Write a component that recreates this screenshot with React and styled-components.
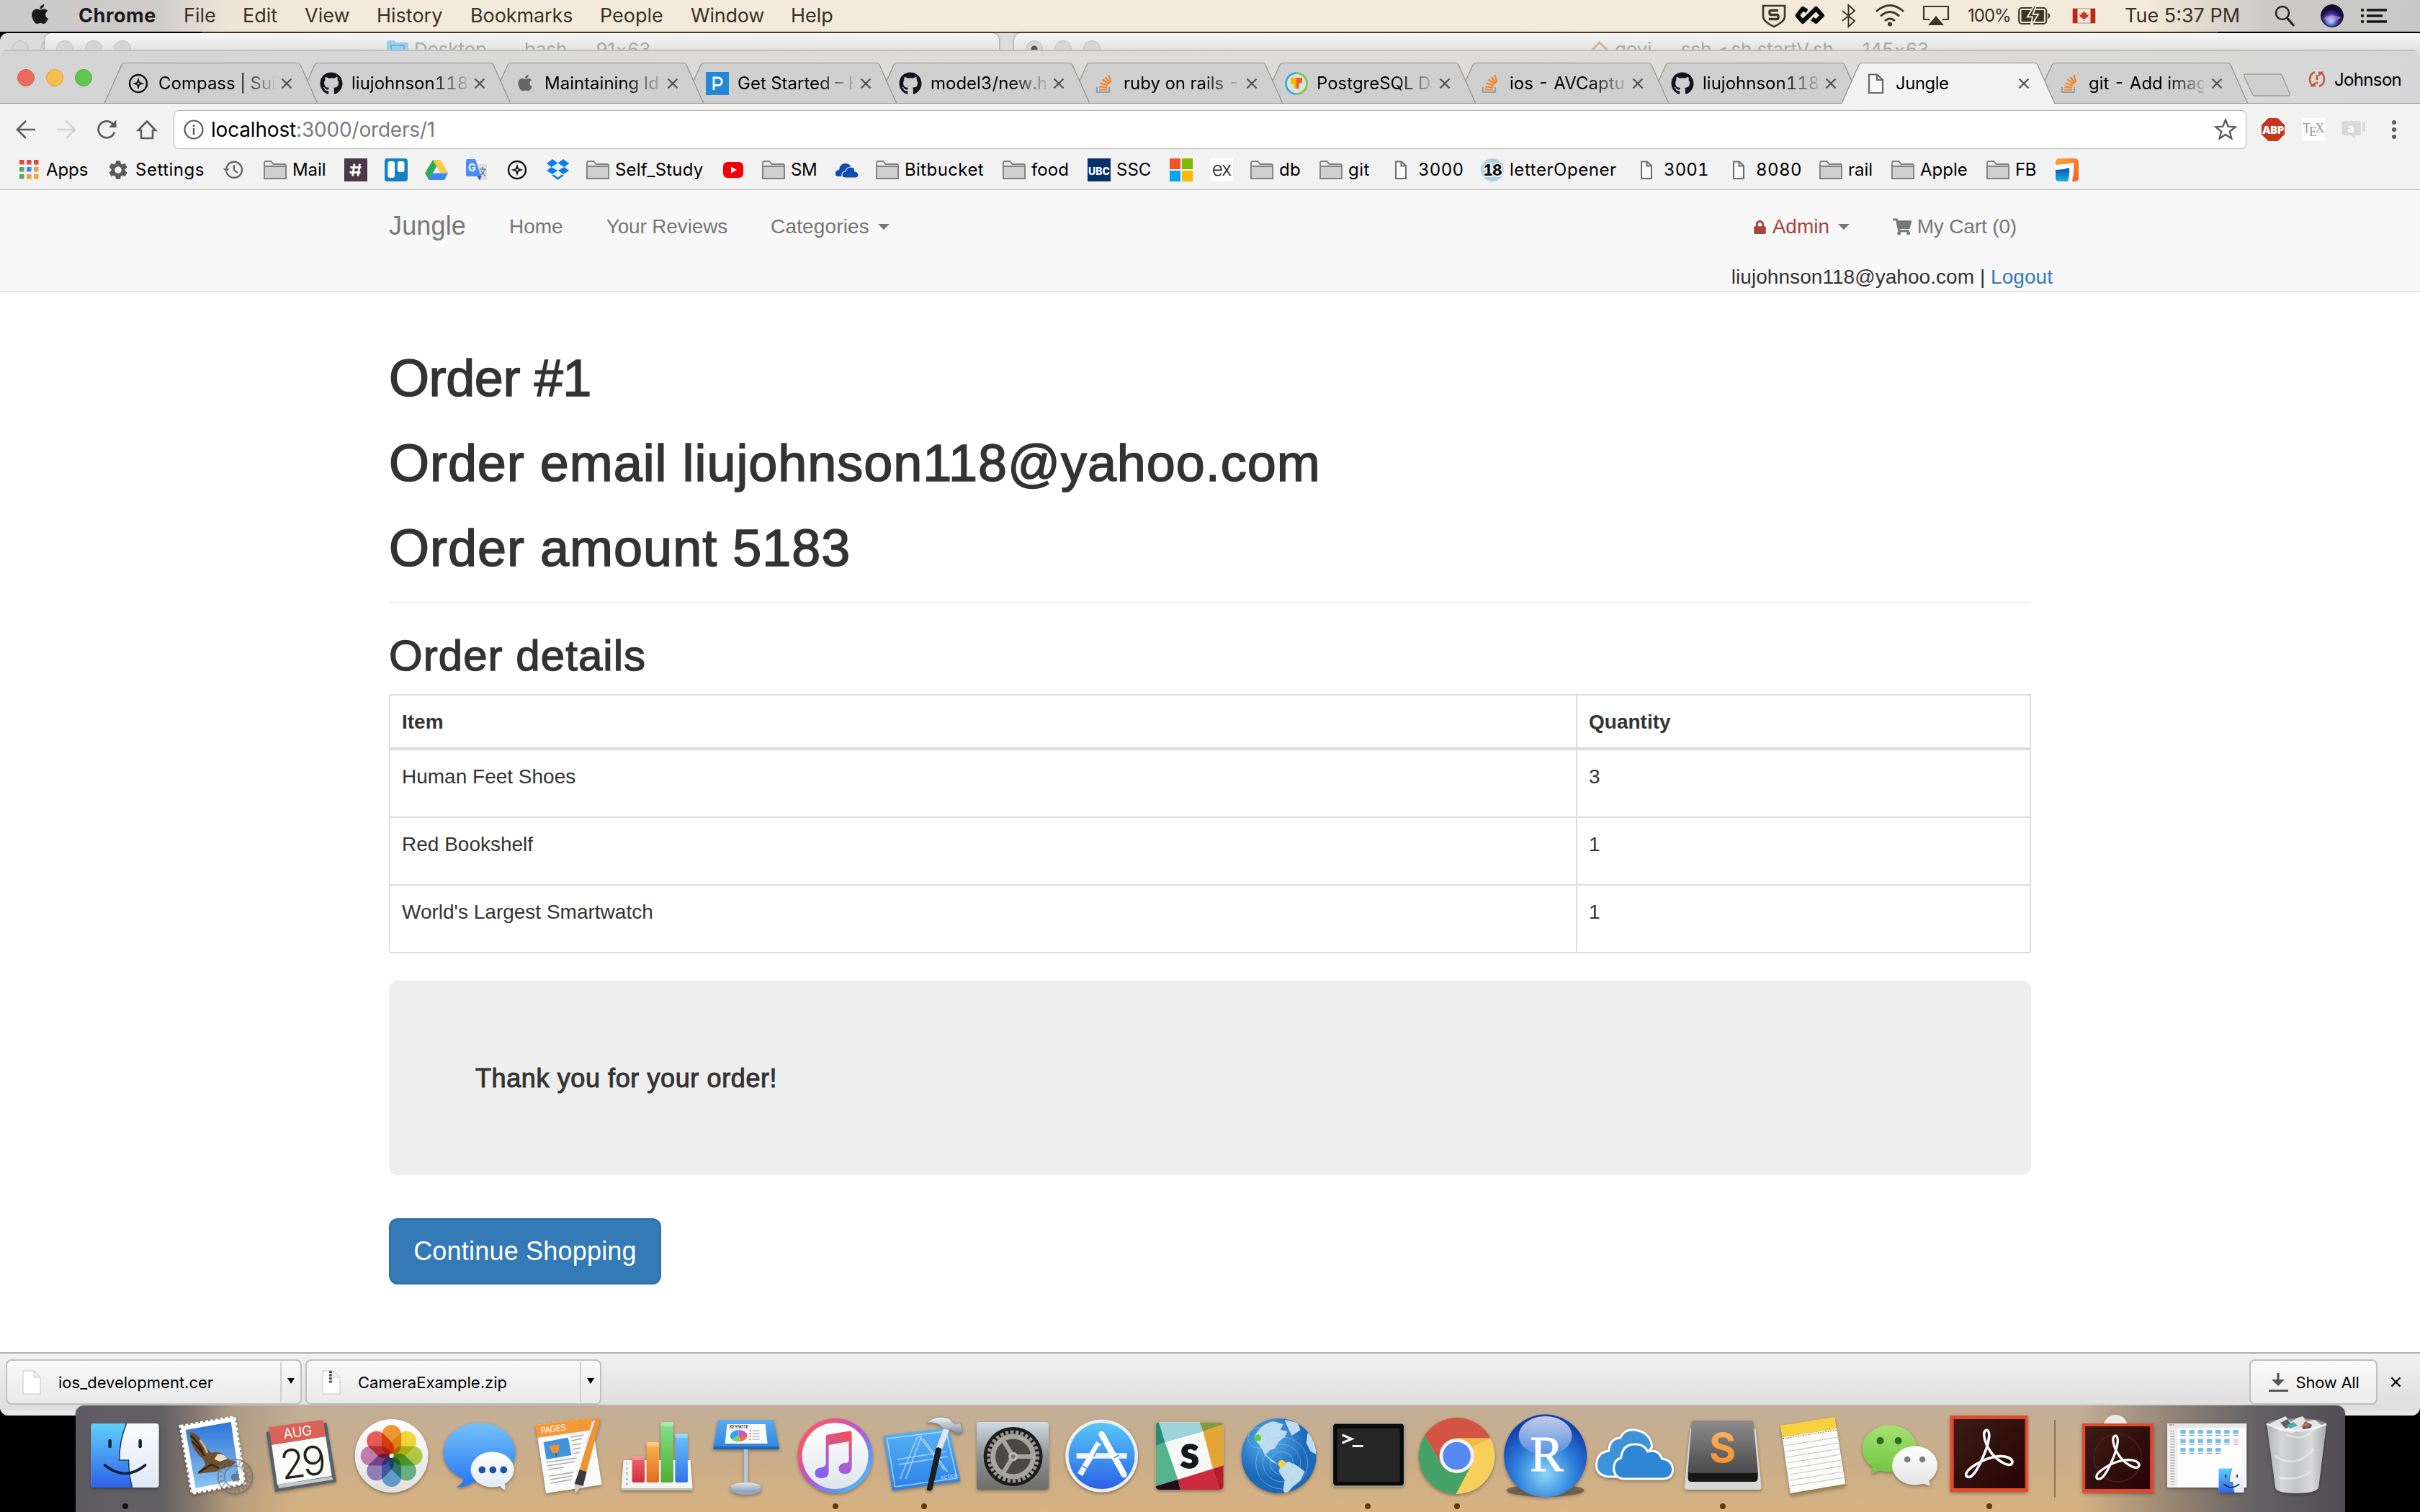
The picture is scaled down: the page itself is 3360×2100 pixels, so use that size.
import React from "react";
import styled, { createGlobalStyle } from "styled-components";
import { FaGithub, FaApple, FaLock, FaShoppingCart } from "react-icons/fa";
import { MdSettings } from "react-icons/md";

const UI = `Inter, Roboto, "Liberation Sans", sans-serif`;
const PAGE = `"Liberation Sans", Arial, sans-serif`;

const GlobalStyle = createGlobalStyle`
  * { box-sizing: border-box; }
  body { margin: 0; background: #000; overflow: hidden; }
  svg { display: block; overflow: visible; flex: none; }
`;

const Desktop = styled.div`
  position: relative;
  width: 3360px;
  height: 2100px;
  overflow: hidden;
  background: linear-gradient(90deg, #000 280px, #5b4a36 281px, #6a5640 50%, #5b4a36 3079px, #000 3080px) 0 0 / 100% 60px no-repeat #000;
  font-family: ${UI};
  color: #000;
`;

/* ---------- menu bar ---------- */
const MenuBar = styled.header`
  display: flex;
  justify-content: space-between;
  height: 44px;
  padding: 0 46px 0 40px;
  background: linear-gradient(90deg, #c9c9ca 0, #cfcdca 220px, #efe6d8 320px, #f3eadb 480px, #f3eadb 2980px, #e6ddd0 3040px, #cbcac8 3150px, #c8c8c8 100%);
`;
const MenuGroup = styled.div`
  display: flex;
  align-items: center;
  height: 44px;
`;
const MenuItem = styled.div`
  flex: none;
  width: ${(p) => p.$w}px;
  font-size: ${(p) => p.$size || 27}px;
  line-height: 44px;
  font-weight: ${(p) => (p.$bold ? 700 : 400)};
  letter-spacing: ${(p) => p.$ls || 0}px;
  color: ${(p) => (p.$bold ? "#1c1b1a" : "#3a3126")};
  white-space: nowrap;
`;

/* ---------- background windows ---------- */
const BackWindow = styled.section`
  position: absolute;
  top: 46px;
  left: ${(p) => p.$x}px;
  width: ${(p) => p.$w}px;
  height: 60px;
  display: flex;
  padding-left: 16px;
  gap: 16px;
  border-radius: 10px 10px 0 0;
  background: ${(p) => (p.$dim ? "#dcdcdc" : "linear-gradient(#f6f6f6, #e2e2e2 24px)")};
  box-shadow: 0 0 3px rgba(0, 0, 0, 0.55);
`;
const GreyDot = styled.i`
  flex: none;
  width: 24px;
  height: 24px;
  margin-top: 10px;
  border: 1px solid #c2c2c2;
  border-radius: 50%;
  background: ${(p) => (p.$edited ? "radial-gradient(#555 4px, #d6d6d6 5px)" : "#d6d6d6")};
`;
const BackTitle = styled.div`
  display: flex;
  gap: 8px;
  margin-left: ${(p) => p.$x}px;
  font-size: 26px;
  line-height: 46px;
  letter-spacing: -0.12px;
  color: #a9a9a9;
  white-space: nowrap;
`;

/* ---------- browser ---------- */
const Browser = styled.main`
  position: absolute;
  top: 69px;
  left: 0;
  width: 3360px;
  height: 1897px;
  display: flex;
  flex-direction: column;
  overflow: hidden;
  border-radius: 10px 10px 12px 12px;
  background: #fff;
`;
const TabStrip = styled.div`
  position: relative;
  display: flex;
  align-items: flex-end;
  height: 75px;
  border-top: 2px solid #bdbdbd;
  background: linear-gradient(90deg, #d4d4d4, #dcdbda 30%, #dedddb 75%, #d6d6d6);
  &::after {
    content: "";
    position: absolute;
    left: 0;
    right: 0;
    bottom: 0;
    height: 1px;
    background: #989898;
    z-index: 20;
  }
`;
const Lights = styled.div`
  display: flex;
  gap: 16px;
  width: 145px;
  height: 73px;
  padding: 25px 0 0 24px;
`;
const Light = styled.i`
  width: 24px;
  height: 24px;
  border-radius: 50%;
  background: ${(p) => p.$c};
  border: 1px solid ${(p) => p.$b};
`;
const TabBox = styled.div`
  position: relative;
  z-index: ${(p) => p.$z};
  display: flex;
  align-items: center;
  flex: none;
  width: 296px;
  height: 57px;
  margin-right: -28px;
  padding-left: 31px;
`;
const TabShape = styled.svg`
  position: absolute;
  inset: 0;
`;
const TabIcon = styled.span`
  position: relative;
  width: 32px;
  height: 32px;
  margin-right: 12px;
`;
const TabTitle = styled.span`
  position: relative;
  width: 160px;
  margin-right: 10px;
  overflow: hidden;
  font-size: 24px;
  font-variant-numeric: tabular-nums;
  line-height: 34px;
  letter-spacing: ${(p) => p.$ls || 0}px;
  white-space: nowrap;
  mask-image: linear-gradient(90deg, #000 110px, transparent 168px);
`;
const CloseIcon = styled.svg`
  position: relative;
`;
const NewTab = styled.svg`
  margin: 0 24px 10px 22px;
`;
const Profile = styled.div`
  display: flex;
  align-items: center;
  gap: 12px;
  height: 32px;
  margin-bottom: 18px;
  font-size: 24px;
  letter-spacing: -0.65px;
`;
const NavRow = styled.div`
  display: flex;
  align-items: center;
  height: 72px;
  padding-left: 8px;
  background: #f2f2f2;
`;
const NavSlot = styled.span`
  display: flex;
  justify-content: center;
  flex: none;
  width: 56px;
`;
const UrlBox = styled.div`
  display: flex;
  align-items: center;
  width: 2878px;
  height: 54px;
  margin: 0 9px;
  padding: 0 12px 0 13px;
  border: 1px solid #b3b3b3;
  border-radius: 7px;
  background: #fff;
`;
const UrlText = styled.div`
  flex: 1;
  margin-left: 10px;
  font-size: 28px;
  letter-spacing: -0.18px;
  color: #7b7b7b;
  b { font-weight: 400; color: #000; }
`;
const Bookmarks = styled.div`
  display: flex;
  align-items: center;
  flex: none;
  height: 48px;
  padding: 0 0 7px 24px;
  border-bottom: 1px solid #b4b4b4;
  background: #f2f2f2;
`;
const Bookmark = styled.div`
  display: flex;
  align-items: center;
  gap: 8px;
  flex: none;
  width: ${(p) => p.$w}px;
  font-size: 24px;
  font-variant-numeric: tabular-nums;
  line-height: 38px;
  letter-spacing: ${(p) => p.$ls || 0}px;
  white-space: nowrap;
`;

/* ---------- web page ---------- */
const Page = styled.div`
  flex: 1;
  font-family: ${PAGE};
  font-size: 28px;
  line-height: 40px;
  color: #333;
`;
const Navbar = styled.nav`
  height: 142px;
  border-bottom: 2px solid #e7e7e7;
  background: #f8f8f8;
`;
const Container = styled.div`
  width: 2280px;
  margin: 0 auto;
`;
const NavLine = styled.div`
  display: flex;
  height: 100px;
  margin: 0 -10px 0 -30px;
  color: #777;
`;
const Brand = styled.a`
  padding: 30px;
  font-size: 36px;
  letter-spacing: 0.15px;
`;
const NavLink = styled.a`
  display: flex;
  align-items: center;
  height: 40px;
  margin: 31px 30px 0;
  white-space: nowrap;
  letter-spacing: ${(p) => p.$ls || 0}px;
  color: ${(p) => p.$c || "#777"};
`;
const Spacer = styled.span`
  flex: 1;
`;
const Caret = styled.i`
  width: 0;
  height: 0;
  margin-left: 12px;
  border: 8px solid transparent;
  border-top-color: #777;
  border-bottom-width: 0;
`;
const UserLine = styled.div`
  height: 40px;
  padding-top: 1px;
  margin-right: -30px;
  text-align: right;
  letter-spacing: 0.05px;
  a { color: #337ab7; }
`;
const H1 = styled.h1`
  margin: 0 0 40px;
  font-size: 72px;
  line-height: 78px;
  font-weight: 400;
  letter-spacing: ${(p) => p.$ls || 0}px;
  -webkit-text-stroke: 1.6px #333;
`;
const PageHeader = styled.header`
  padding: 80px 0 0;
  height: 432px;
  border-bottom: 2px solid #eee;
`;
const H2 = styled.h2`
  margin: 40px 0 20px;
  font-size: 60px;
  line-height: 66px;
  font-weight: 400;
  letter-spacing: 1.05px;
  -webkit-text-stroke: 1.4px #333;
`;
const Table = styled.div`
  border: 2px solid #ddd;
`;
const Row = styled.div`
  display: grid;
  grid-template-columns: 1646px 1fr;
  height: ${(p) => (p.$head ? 76 : 94)}px;
  border-bottom: ${(p) => (p.$head ? 4 : 2)}px solid #ddd;
  font-weight: ${(p) => (p.$head ? 700 : 400)};
  &:last-child { height: 92px; border-bottom: 0; }
`;
const Cell = styled.div`
  padding: 17px 16px 0;
  & + & { border-left: 2px solid #ddd; }
`;
const Jumbotron = styled.div`
  height: 270px;
  margin-top: 38px;
  padding: 116px 120px 0;
  border-radius: 12px;
  background: #eee;
  font-size: 36px;
  line-height: 40px;
  letter-spacing: 0.6px;
  -webkit-text-stroke: 1px #333;
`;
const Button = styled.a`
  display: inline-flex;
  justify-content: center;
  align-items: center;
  width: 378px;
  height: 92px;
  margin-top: 60px;
  border: 2px solid #2e6da4;
  border-radius: 12px;
  background: #337ab7;
  color: #fff;
  font-size: 36px;
  letter-spacing: 0.2px;
`;

/* ---------- downloads shelf ---------- */
const Shelf = styled.footer`
  display: flex;
  align-items: flex-start;
  height: 88px;
  padding: 8px 9px 0 8px;
  border-top: 2px solid #b2b2b2;
  background: linear-gradient(#f1f1f1, #dedede 76px, #ececec);
  font-size: 22px;
`;
const Download = styled.div`
  display: flex;
  align-items: center;
  width: 411px;
  height: 63px;
  margin-right: 5px;
  padding-left: 21px;
  border: 2px solid #bfbfbf;
  border-radius: 8px;
  background: linear-gradient(#f9f9f9, #e9e9e9);
`;
const FileName = styled.span`
  flex: 1;
  margin-left: 24px;
`;
const DownMenu = styled.span`
  display: flex;
  justify-content: center;
  width: 28px;
  height: 56px;
  padding-top: 22px;
  border-left: 2px solid #cfcfcf;
`;
const ShowAll = styled.div`
  display: flex;
  align-items: center;
  justify-content: center;
  gap: 11px;
  width: 178px;
  height: 63px;
  border: 2px solid #bfbfbf;
  border-radius: 8px;
  background: linear-gradient(#fafafa, #ececec);
  letter-spacing: -0.25px;
`;
const ShelfClose = styled.span`
  display: flex;
  align-items: center;
  justify-content: center;
  width: 50px;
  height: 63px;
`;

/* ---------- dock ---------- */
const Dock = styled.aside`
  position: absolute;
  left: 105px;
  top: 1952px;
  width: 3151px;
  height: 148px;
  display: flex;
  padding: 4px 0 0 7.4px;
  border-radius: 12px 12px 0 0;
  box-shadow: 0 0 2px rgba(0, 0, 0, 0.5);
  background:
    linear-gradient(90deg, #5e5c60 0, #626063 120px, rgba(120, 110, 105, 0.85) 165px, rgba(150, 135, 120, 0.5) 215px, rgba(180, 160, 130, 0) 310px, rgba(180, 160, 130, 0) 2780px, rgba(120, 110, 105, 0.75) 2930px, #636165 3030px, #504e53 100%),
    linear-gradient(#c2ae96, #ccae88 60%, #d7b382);
`;
const Slot = styled.div`
  flex: none;
  width: ${(p) => p.$w}px;
`;
const RunDot = styled.i`
  display: block;
  width: 8px;
  height: 8px;
  margin: 4px auto 0;
  border-radius: 50%;
  background: ${(p) => p.$c};
`;
const Divider = styled.i`
  flex: none;
  width: 2px;
  height: 108px;
  margin: 16px 24px 0 28px;
  background: rgba(90, 65, 40, 0.55);
`;
const DockSvg = styled.svg`
  filter: drop-shadow(0 2px 2px rgba(0, 0, 0, 0.35));
`;
const Petal = styled.rect`
  mix-blend-mode: multiply;
`;

/* ---------- small icons ---------- */
const I = ({ children, w = 32, h = 32, vb = "0 0 32 32", ...p }) => (
  <svg width={w} height={h} viewBox={vb} fill="none" {...p}>{children}</svg>
);
const CompassIcon = () => (
  <I><circle cx="16" cy="16" r="12" stroke="#111" strokeWidth="2.4" /><path d="M16 7.500l2 6.500 6.500 2-6.500 2-2 6.500-2-6.500-6.500-2 6.500-2z" fill="#111" /><circle cx="16" cy="16" r="1.300" fill="#fff" /></I>
);
const GithubIcon = () => <FaGithub size={32} color="#15111a" />;
const AppleGrey = () => <I><g transform="translate(4 2)"><FaApple size={26} color="#666" /></g></I>;
const PIcon = () => (
  <I><rect width="32" height="32" fill="#2189d6" /><path d="M11 25V8h6a5 5 0 0 1 0 10.500h-6" stroke="#fff" strokeWidth="2.800" /></I>
);
const StackIcon = () => (
  <I><path d="M7 21v7h17v-7" stroke="#9a9ca0" strokeWidth="2.200" /><path d="M10 24.500h11M10.300 20.500l10.800 1M11.500 15.500l10.500 3M14.500 10.500l9 6M18.500 7l6.500 8.500M23.500 4l2.800 10" stroke="#f48024" strokeWidth="2.200" /></I>
);
const PgIcon = () => (
  <I><circle cx="16" cy="16" r="14.500" fill="#dfe0e0" stroke="#2aa9e0" strokeWidth="2.600" /><path d="M16 1.500a14.500 14.500 0 0 1 0 29" stroke="#86cf3c" strokeWidth="2.600" /><path d="M8 8h8v15h-3.500v-6H8z" fill="#f8b800" /><path d="M16 8h8v7h-4.500v8H16z" fill="#f25a29" /></I>
);
const PageIcon = () => (
  <I><path d="M7 3.500h11.500L26 11v18H7zM18 3.500V11h8" stroke="#666" strokeWidth="2.200" fill="#fff" fillOpacity=".5" /></I>
);
const PageSmall = () => (
  <I><path d="M9 4.500h8l6 6V28H9zM16.500 4.500v6H23" stroke="#6c6c6c" strokeWidth="2" fill="#fff" fillOpacity=".5" /></I>
);
const Folder = () => (
  <I><path d="M1 28V6q0-2 2-2h7.500l3 4H29q2 0 2 2v18z" fill="#e9e9e9" stroke="#808080" strokeWidth="1.800" /><path d="M1 11h30v17H1z" fill="#cfcfcf" stroke="#808080" strokeWidth="1.800" /></I>
);
const AppsIcon = () => (
  <I>{["#e0473d", "#e0473d", "#e0473d", "#58a55c", "#4a80f0", "#eba43c", "#58a55c", "#eba43c", "#eba43c"].map((c, i) => (
    <rect key={i} x={3 + (i % 3) * 10} y={2 + Math.floor(i / 3) * 10} width="6.500" height="6.500" fill={c} />))}</I>
);
const GearIcon = () => <MdSettings size={32} color="#5a5a5a" />;
const HistoryIcon = () => (
  <I><path d="M6.500 19A11 11 0 1 0 8 9.500l-2 4" stroke="#666" strokeWidth="2.400" /><path d="M1.500 14h9l-4.500 5z" fill="#666" /><path d="M17 9v7.500l5 3.500" stroke="#666" strokeWidth="2.400" /></I>
);
const SlackFav = () => <I><rect width="32" height="32" fill="#4a374a" /><path d="M14 7.500l-2.500 17M21.500 7.500l-2.500 17M8.500 12.500h15M7.500 19.500h15" stroke="#fff" strokeWidth="2.800" /></I>;
const Trello = () => <I><rect width="32" height="32" rx="4" fill="#1682c4" /><rect x="4.500" y="4" width="9.500" height="23" rx="3" fill="#fff" /><rect x="18" y="4" width="9.500" height="15" rx="3" fill="#fff" /></I>;
const Drive = () => <I><path d="M11 2h10.500l10.500 18H21z" fill="#fdcb43" /><path d="M11 2l5.200 9L5.500 30 0 20.500z" fill="#2bac62" /><path d="M10.500 20.500H32L27 30H5.500z" fill="#4286f5" /></I>;
const Translate = () => (
  <I><path d="M13 8h15q2 0 2 2v18q0 2-2 2H18z" fill="#dcdee0" /><path d="M16 24l4 6.500 3-6.500z" fill="#3a50b8" /><path d="M3 1h11l8 24H3q-2 0-2-2V3q0-2 2-2z" fill="#4d8bf5" /><text x="4" y="18" fontSize="14" fontWeight="700" fill="#fff" fontFamily="Inter">G</text><path d="M20 15h9M24 12v3M27 15c-1 4-3 7-6 8M22 17c2 4 4 6 6 7" stroke="#6d8790" strokeWidth="1.500" /></I>
);
const Dropbox = () => <I><path d="M9 1l7.500 5.500L24 1l8 6-6.500 5 6.500 5-8 5-7.500-5.500L9 22l-8-5 6.500-5L1 7zM8 23.500l8.500 6.500 8.500-6.500-3-1-5.500 4-5.500-4z" fill="#0a7df0" /><path d="M7.500 12L16.500 6.500 25.500 12 16.500 17z" fill="#f2f2f2" /></I>;
const Youtube = () => <I><rect x="2" y="5" width="28" height="22" rx="6" fill="#f50000" /><path d="M13 11.500l8 4.500-8 4.500z" fill="#fff" /></I>;
const CloudBlue = () => <I><path d="M3 25q-4-1-3-5t5-4q1-9 9-9 7 0 7 6-6 1-7 7-5 1-3 5z" fill="#0f4bb0" /><path d="M13 27q-5-1-4-5t5-4q1-6 7-6t6 6q5 1 5 5 0 4-4 4z" fill="#0f4bb0" stroke="#f2f2f2" strokeWidth="1.200" /></I>;
const Ubc = () => <I><rect width="32" height="32" fill="#04316b" /><text x="16" y="23" textAnchor="middle" fontSize="14" fontWeight="800" fill="#fff" fontFamily="Inter">UBC</text></I>;
const Win = () => <I><path d="M0 0h15v15H0z" fill="#f35425" /><path d="M17 0h15v15H17z" fill="#80bb03" /><path d="M0 17h15v15H0z" fill="#06a5f0" /><path d="M17 17h15v15H17z" fill="#ffba08" /></I>;
const Ex = () => <I><rect width="32" height="32" fill="#fff" /><text x="16" y="24" textAnchor="middle" fontSize="26" fontWeight="300" fill="#222" fontFamily="Inter" letterSpacing="-1">ex</text></I>;
const Eighteen = () => <I><circle cx="16" cy="16" r="16" fill="#aed0de" /><text x="16" y="23.500" textAnchor="middle" fontSize="21" fontWeight="800" fill="#111" stroke="#fff" strokeWidth="3" paintOrder="stroke" fontFamily="Inter" letterSpacing="-1">18</text></I>;
const LastFav = () => (
  <I><defs><linearGradient id="lf" x2="1" y2="1"><stop offset="0" stopColor="#fba52f" /><stop offset="1" stopColor="#fb5a1f" /></linearGradient><linearGradient id="lb" x2="0" y2="1"><stop offset="0" stopColor="#0d4fb8" /><stop offset="1" stopColor="#16b7d8" /></linearGradient></defs>
    <rect width="32" height="32" rx="5" fill="url(#lf)" /><path d="M0 9q14-1 25-3 1 12-2 26H5q-5 0-5-5z" fill="#fff" /><path d="M0 16q10 0 19-3 1 10-2 19H5q-5 0-5-5z" fill="url(#lb)" /></I>
);
const XIcon = ({ c = "#555", s = 16 }) => <CloseIcon width={s} height={s} viewBox="0 0 16 16"><path d="M1.500 1.500l13 13M14.500 1.500l-13 13" stroke={c} strokeWidth="2.400" /></CloseIcon>;

const TABS = [
  ["Compass | Suite", CompassIcon], ["liujohnson118/", GithubIcon], ["Maintaining Iden", AppleGrey], ["Get Started – H", PIcon],
  ["model3/new.html", GithubIcon], ["ruby on rails - P", StackIcon], ["PostgreSQL Dat", PgIcon], ["ios - AVCaptureD", StackIcon],
  ["liujohnson118/", GithubIcon], ["Jungle", PageIcon, -0.5], ["git - Add image", StackIcon],
];
/* left edge, icon, label, tracking */
const BOOKMARKS = [
  [24, AppsIcon, "Apps", -0.1], [148, GearIcon, "Settings", 0.5], [308, HistoryIcon], [366, Folder, "Mail", -0.1], [478, SlackFav], [534, Trello],
  [590, Drive], [646, Translate], [702, CompassIcon], [758, Dropbox], [814, Folder, "Self_Study", 0.2], [1002, Youtube],
  [1058, Folder, "SM", -0.3], [1160, CloudBlue], [1216, Folder, "Bitbucket", 0.4], [1392, Folder, "food", 0.1], [1510, Ubc, "SSC"],
  [1624, Win], [1680, Ex], [1736, Folder, "db", 0.3], [1832, Folder, "git", 0.5], [1929, PageSmall, "3000", 0.3],
  [2056, Eighteen, "letterOpener", 0.55], [2270, PageSmall, "3001", 0.1], [2398, PageSmall, "8080", 0.4], [2526, Folder, "rail"],
  [2626, Folder, "Apple"], [2758, Folder, "FB", -0.3], [2854, LastFav], [2910],
];
/* label, left edge, bold, tracking */
const MENUS = [["Chrome", 109, 1, 0.6], ["File", 255], ["Edit", 337], ["View", 423], ["History", 523], ["Bookmarks", 653, 0, -0.1], ["People", 833], ["Window", 959, 0, -0.2], ["Help", 1098], ["", 1160]];
const ITEMS = [["Human Feet Shoes", 3], ["Red Bookshelf", 1], ["World's Largest Smartwatch", 1]];

/* ---------- dock icon drawings, origin at the icon centre ---------- */
const G = ({ id, s, x2 = 0, y2 = 1 }) => (
  <linearGradient id={id} x1="0" y1="0" x2={x2} y2={y2}>{s.map((c, i) => <stop key={i} offset={i / (s.length - 1)} stopColor={c} />)}</linearGradient>
);
const FinderFace = () => (
  <>
    <defs><G id="fa" s={["#5fd0fb", "#2f62e8"]} /><G id="fb" s={["#fbfcfd", "#dfe8f3"]} /></defs>
    <rect x="-47" y="-45" width="94" height="89" rx="4" fill="url(#fb)" />
    <path d="M-43-45H2C-5-28-8-10-8 6H5C5 20 7 34 10 44H-43q-4 0-4-4V-41q0-4 4-4z" fill="url(#fa)" />
    <path d="M2-45C-5-28-8-10-8 6H5C5 20 7 34 10 44" fill="none" stroke="#1d3f6e" strokeWidth="1.600" />
    <path d="M-21-21v8M21-21v8" stroke="#12233f" strokeWidth="4.500" strokeLinecap="round" />
    <path d="M-28 13Q0 36 28 13" fill="none" stroke="#12233f" strokeWidth="3.600" strokeLinecap="round" />
  </>
);
const Mail = () => (
  <>
    <defs><G id="ma" s={["#2f74d8", "#8cc6f2"]} /></defs>
    <path d="M-47-41L28-54 42 38-31 52z" fill="#fff" stroke="#fff" strokeWidth="4" strokeDasharray="4 3" />
    <path d="M-40-36L23-47 35 33-26 45z" fill="url(#ma)" />
    <path d="M-34-33Q-22-32-14-14L-4-4Q6-8 14 0L22 6 30 8 24 14Q10 18 2 22L-24 25-12 12-16 4Q-34-10-34-33z" fill="#6e5031" />
    <path d="M-33-28Q-20-18-16-4M-31-20Q-20-10-14 0M-22 23L-4 12 6 17" stroke="#34220f" strokeWidth="2.400" fill="none" />
    <path d="M-20-22Q-12-12-10-4" stroke="#c9b18a" strokeWidth="3" fill="none" /><path d="M4-2Q12-4 18 4L8 8 0 5z" fill="#e9dfc8" />
    <circle cx="29" cy="29" r="24" fill="none" stroke="#6d6b66" strokeOpacity=".65" strokeWidth="2" />
    <circle cx="29" cy="29" r="15" fill="none" stroke="#6d6b66" strokeOpacity=".65" strokeWidth="2" />
    <circle cx="29" cy="29" r="19.500" fill="none" stroke="#6d6b66" strokeOpacity=".5" strokeWidth="5" strokeDasharray="2.500 3.500" />
    <g transform="translate(21 20)" opacity=".6"><FaApple size={17} color="#4a5360" /></g>
  </>
);
const Calendar = () => (
  <>
    <path d="M-51-33L33-46 46.500 36-38.500 50z" fill="#56636b" />
    <path d="M-35 40L40 29 42 33-33 45z" fill="#c9c9c9" />
    <path d="M-43.500-15.300L31.500-27 40 28-35.500 40z" fill="#fbfbfa" />
    <path d="M-47-39.700L28-50 31.500-27-43.500-15.300z" fill="#dc6156" />
    <g transform="rotate(-8)" fontFamily="Inter" textAnchor="middle"><text x="-3" y="-27" fontSize="19" fill="#fff" letterSpacing="-.500">AUG</text><text x="-3" y="29" fontSize="56" fontWeight="300" fill="#222" letterSpacing="-4">29</text></g>
  </>
);
const PETALS = ["#f39b33", "#f6de3a", "#b9d44c", "#70c08a", "#6cabe2", "#9d8ac8", "#cc86b9", "#ec5f55"];
const Photos = () => (
  <>
    <defs><G id="pa" s={["#ffffff", "#e2e0dd"]} /></defs>
    <circle r="51" fill="url(#pa)" />
    {PETALS.map((c, i) => <Petal key={c} x="-13.500" y="-43" width="27" height="42" rx="13.500" fill={c} transform={`rotate(${i * 45})`} />)}
    <circle r="3" fill="#fff" />
  </>
);
const Messages = () => (
  <>
    <defs><G id="me" s={["#74c2f7", "#2d7cf6"]} /><G id="mf" s={["#fdfdfe", "#e3edf7"]} /></defs>
    <path d="M-22 31Q-25 39-33 44-18 43-8 36z" fill="#2d7cf6" />
    <ellipse cx="-1" cy="-5" rx="50" ry="41" fill="url(#me)" />
    <path d="M26 40Q29 45 35 48 35 42 34 38z" fill="#e3edf7" /><ellipse cx="17" cy="19" rx="30" ry="24.500" fill="url(#mf)" />
    {[2.7, 17.7, 32.700].map((x) => <circle key={x} cx={x} cy="19.500" r="4.900" fill="#22579f" />)}
  </>
);
const Pages = () => (
  <>
    <path d="M-47-43L30-53 45 40-32.500 52z" fill="#fafafa" />
    <path d="M-47-43L30-53 32.500-36-44.500-25z" fill="#f39a37" />
    <text transform="rotate(-8)" x="-35" y="-36" fontSize="12" fill="#fff" fontFamily="Inter" letterSpacing="-.700">PAGES</text>
    <path d="M-36-19L-2-25.500 3-1-32 5z" fill="#3f93dd" /><path d="M-28-15q4 3 6-1 4 3 7-1 2 14-5 14-7-2-8-12z" fill="#f2902a" /><path d="M-19-4l1 5" stroke="#2c6b3a" strokeWidth="2" />
    <path d="M2-26L20-29M3-21L18-24M4-15L16-17M5-9L15-11M6-3L14-5M-32 9L10 3M-31 14L8 8M-30 19L-8 16M-28 28L6 23M-27 33L4 28M-26 38L3 33" stroke="#aaa" strokeWidth="1.500" />
    <path d="M34-50q4-5 9-1L24 22 14 19z" fill="#ee9430" /><path d="M14 19L24 22 19 42 7 39z" fill="#3a3a3c" /><path d="M7 39L17 42 8 53z" fill="#c9cdd2" /><path d="M34-49L23-16" stroke="#dfe6ee" strokeWidth="3" />
  </>
);
const BARS = [[-36, 0, "#f16a6c", "#cf2f3c"], [-16, -19, "#f9b64e", "#e06a23"], [3.800, -47, "#86e28a", "#4fae33"], [23.800, -31, "#6cc6f7", "#2f74e8"]];
const Numbers = () => (
  <>
    <path d="M-48 6H45L48 45H-51z" fill="#f4f4f4" /><path d="M-51 45H48V48H-51z" fill="#c4c0ba" />
    {BARS.map(([x, y, a, b], i) => <g key={i}><defs><G id={`nb${i}`} s={[a, b]} /></defs><rect x={x} y={y} width="17.500" height={37 - y} rx="2" fill={`url(#nb${i})`} /><rect x={x} y={y} width="17.500" height="6" rx="2" fill="#fff" opacity=".3" /></g>)}
    <g fontSize="5" fill="#777" fontFamily="Inter">{[1, 2, 3, 4, 5].map((n) => <text key={n} x="-45" y={6 + n * 7}>{n}</text>)}</g>
  </>
);
const Keynote = () => (
  <>
    <defs><G id="ka" s={["#5aaaf0", "#2e83dc"]} /><G id="kb" s={["#e4ebf2", "#8fa3b8"]} /></defs>
    <rect x="-4" y="-10" width="6" height="56" fill="#b7c4d2" /><ellipse cx="-1" cy="46" rx="22" ry="8" fill="#93a6bb" /><ellipse cx="-1" cy="43" rx="21" ry="6" fill="url(#kb)" />
    <path d="M-39.600-50H37.600L45-13V-9H-46V-13z" fill="url(#ka)" /><path d="M-46-13H45V-9H-46z" fill="#1e68b8" />
    <path d="M-27-44H26L29-17H-30z" fill="#fafcff" />
    <text x="-24" y="-38.500" fontSize="5.500" fontWeight="700" fill="#444" fontFamily="Inter">KEYNOTE</text>
    <path d="M-11-28V-36A12 8.500 0 0 1 1-28z" fill="#d253c0" /><path d="M-11-28H1A12 8.500 0 0 1-8-20z" fill="#f0654f" /><path d="M-11-28L-8-20A12 8.500 0 0 1-21-23z" fill="#7fd25e" /><path d="M-11-28L-21-23A12 8.500 0 0 1-11-36z" fill="#36a3f0" />
    <path d="M8-35h10M8-31h10M8-27h10M8-23h10" stroke="#bbb" strokeWidth="1.400" /><path d="M5-36v15" stroke="#d76" strokeWidth="2" strokeDasharray="2 2" />
  </>
);
const ITunes = () => (
  <>
    <defs><G id="ia" x2={1} y2={1} s={["#fa5b55", "#f0557a", "#b552e0", "#5a9cf5", "#58d0f5"]} /><G id="ic" s={["#ffffff", "#dfe6ec"]} /><linearGradient id="id" x1=".6" y1="0" x2=".3" y2="1"><stop stopColor="#f0505a" /><stop offset=".5" stopColor="#b65bc0" /><stop offset="1" stopColor="#7d62f8" /></linearGradient></defs>
    <circle r="52" fill="url(#ia)" /><circle r="46" fill="url(#ic)" />
    <path d="M-13-27Q-13-29-10-29.500L20-34.500Q23-35 23-32V15Q23 25 14 25 5 25 5 18 5 10 14 10 19 10 19 6V-20L-9-15V22Q-9 31-19 31-28 31-28 24-28 17-19 16-13 15-13 11z" fill="url(#id)" />
  </>
);
const Xcode = () => (
  <>
    <defs><G id="xa" s={["#58b4f3", "#2b7fe8"]} /><G id="xb" s={["#f0f4f8", "#7e8c99"]} /></defs>
    <path d="M-57-28L33-39 50 35-44.600 48z" fill="url(#xa)" /><path d="M-52-24L30-34 45 31-41 43z" fill="none" stroke="#bfe0fb" strokeWidth="1.200" />
    <path d="M-10-26L-34 32M-4-28L-26 32M-8-28L28 20M-2-24L32 22M-38 5L30-6M-36 12L32 1" stroke="#a9d6fa" strokeWidth="1.400" fill="none" />
    <text transform="rotate(-8)" x="18" y="36" fontSize="7" fill="#bfe0fb" fontFamily="Inter">XCODE</text>
    <path d="M28-42L36-40 24-8 16-10z" fill="#dfe5ea" /><path d="M16-11q5-2 8 2L11 46q-3 5-8 1z" fill="#1d1e20" />
    <path d="M3-46Q16-58 34-52L42-44 50-46 53-34 46-30 38-36 26-38Q18-48 3-46z" fill="url(#xb)" stroke="#77838f" strokeWidth=".7" />
  </>
);
const SysPref = () => (
  <>
    <defs><G id="sa" s={["#cfdde4", "#8d9295", "#6e6d6a"]} /></defs>
    <rect x="-50.500" y="-47" width="100" height="94" rx="4" fill="url(#sa)" />
    <circle cy="1" r="41" fill="#1c1c1d" /><circle cy="1" r="34" fill="none" stroke="#9a9894" strokeWidth="5" strokeDasharray="4.400 2.700" /><circle cy="1" r="28" fill="#4a4948" stroke="#a7a5a0" strokeWidth="7" />
    <path d="M0 1L-14-22M0 1H27M0 1L-14 24" stroke="#a7a5a0" strokeWidth="6" /><circle cy="1" r="6.500" fill="#bdbbb6" /><circle cy="1" r="3" fill="#777" />
  </>
);
const AppStore = () => (
  <>
    <defs><G id="aa" s={["#57c7f8", "#2a63e8"]} /></defs>
    <circle r="50.500" fill="#eceef0" /><circle r="46" fill="url(#aa)" />
    <path d="M-35 0H35" stroke="#f2f5f8" strokeWidth="7.500" /><path d="M-4-18L-30 26" stroke="#f7f9fb" strokeWidth="8" /><path d="M0-30L31 26" stroke="#fff" strokeWidth="8.500" strokeLinecap="round" />
    <path d="M-11 1L-3-14M-27 14l7 4M17 3l7-4" stroke="#3a94f0" strokeWidth="1.600" />
  </>
);
const Slack = () => (
  <>
    <defs><clipPath id="sk"><rect x="-48" y="-47" width="94" height="94" rx="5" /></clipPath></defs>
    <g clipPath="url(#sk)"><rect x="-48" y="-47" width="94" height="94" fill="#f6f8f8" />
      <g transform="translate(-532.9 -162) scale(.7143 .3333)">
        <path d="M685 346H764L771 385 697 430z" fill="#9fd3da" /><path d="M679 346H685L697 430 679 446z" fill="#2d8a78" /><path d="M679 446L697 430 722 585 679 612z" fill="#56b38d" />
        <path d="M764 346H811V355L771 385z" fill="#849a3d" /><path d="M771 385L811 355V525L790 540z" fill="#e2a534" />
        <path d="M722 585L790 540 802 628H727z" fill="#cb2a3f" /><path d="M790 540L811 525V628H802z" fill="#b21e2f" /><path d="M679 612L722 585 727 628H679z" fill="#1f0d1d" />
      </g></g>
    <text x="-1" y="17" textAnchor="middle" fontSize="46" fontWeight="800" fill="#15171c" stroke="#15171c" strokeWidth="1.500" fontFamily="Lato, Inter">S</text>
  </>
);
const Globe = () => (
  <>
    <defs><radialGradient id="ga" cx=".35" cy=".3"><stop stopColor="#5bb3f0" /><stop offset="1" stopColor="#1c68b8" /></radialGradient><clipPath id="gc"><circle r="52" /></clipPath></defs>
    <circle r="52" fill="url(#ga)" />
    <g clipPath="url(#gc)" fill="#bfdcef"><path d="M-34-26Q-26-44-8-48L6-44 2-36 12-34 8-26 0-20-6-10-12-8-18-2-12 4-6 8-2 12-10 8-20-2-26-14-30-18z" /><path d="M8-50l18 4 4 10-12 8-6-12z" /><path d="M2 12L14 8 26 14 36 22 30 34 20 42 10 54 6 48 8 34 0 22z" /><path d="M40-32L52-22V-2L44-6 38-18z" /></g>
    <g fill="none" stroke="#9fd0f5" strokeOpacity=".5"><circle cx="-29" cy="-25" r="14" /><circle cx="4" cy="10" r="16" /><circle cx="4" cy="10" r="26" /><circle cx="4" cy="10" r="36" /></g>
    <circle cx="-29" cy="-25" r="4.500" fill="#59d336" /><circle cx="4" cy="11" r="5" fill="#f6d236" />
  </>
);
const Terminal = () => (
  <>
    <rect x="-49" y="-45" width="99" height="87" rx="4" fill="#0a0a0b" stroke="#b7c2c9" strokeWidth="1" /><rect x="-43" y="-38" width="87" height="74" fill="#262626" />
    <path d="M-36-29L-23-23.500-36-18" fill="none" stroke="#f2f2f2" strokeWidth="3.400" /><path d="M-22-13.500h15" stroke="#f2f2f2" strokeWidth="3" />
  </>
);
const ChromeIcon = () => (
  <>
    <circle r="53" fill="#f7cf5b" />
    <path d="M-44.500-28.800A53 53 0 0 1 47-24.500H0L-21 12z" fill="#d35445" />
    <path d="M-44.500-28.800A53 53 0 0 0-1 53L20 13 0 24.500-21 12z" fill="#45a165" />
    <path d="M47-24.500H0l21 12z" fill="#e3a83c" opacity=".5" />
    <circle r="24" fill="#f3f3f2" /><circle r="19.300" fill="#5788ef" />
  </>
);
const RIcon = () => (
  <>
    <defs><radialGradient id="ra" cx=".5" cy=".72" r=".65"><stop stopColor="#8ad8f6" /><stop offset=".55" stopColor="#2f80dc" /><stop offset="1" stopColor="#123fae" /></radialGradient><G id="rb" s={["#ffffff", "#5f90dd"]} /></defs>
    <ellipse cy="48" rx="54" ry="9" fill="#4a4036" opacity=".6" /><circle r="57.500" fill="url(#ra)" /><ellipse cy="-28" rx="37" ry="27" fill="url(#rb)" opacity=".75" />
    <text x="2" y="21" textAnchor="middle" fontSize="70" fill="#fff" stroke="#fff" strokeWidth="1" fontFamily="Liberation Serif">R</text>
  </>
);
const OneDrive = () => (
  <>
    <path d="M-36 29Q-54 26-52 10-50-5-35-7-34-24-19-25-12-40 6-35 24-30 25-12L-10 29z" fill="#3f92d8" stroke="#fff" strokeWidth="3" />
    <path d="M-14 32Q-28 31-28 16-27 5-18 3-16-16 1-16 14-17 19-6 34-10 39 4 54 6 54 20 53 32 40 32z" fill="#2f86d5" stroke="#fff" strokeWidth="3" />
  </>
);
const Sublime = () => (
  <>
    <defs><G id="su" s={["#8c8c8c", "#4a4a4a"]} /><G id="sv" s={["#fbb960", "#f5892a"]} /></defs>
    <path d="M-46-38H45L53 43q0 4-4 4H-50q-4 0-4-4z" fill="#d8d8d6" /><path d="M-49 22H48V31q0 5-5 5H-44q-5 0-5-5z" fill="#161616" />
    <path d="M-44-45q0-4 4-4H38q4 0 4 4L48 20q0 4-4 4H-45q-4 0-4-4z" fill="url(#su)" />
    <text x="-1" y="9" textAnchor="middle" fontSize="57" fontWeight="700" fill="url(#sv)" fontFamily="Inter">S</text>
  </>
);
const Notes = () => (
  <>
    <path d="M-30 53L47 40V42L-29 55z" fill="#a48448" /><path d="M-41-26L34.500-38 46.600 39-30 52z" fill="#fbfbf9" /><path d="M-44-42L31.600-54 34.500-38-41-26z" fill="#f7d23f" />
    <path d="M-40-24L35-36" stroke="#8b7b4a" strokeDasharray="1.500 2" strokeWidth="1.500" />
    {[0, 1, 2, 3, 4, 5, 6, 7].map((n) => <path key={n} d={`M${-38 + n * 1.2} ${-14 + n * 8}l75-12`} stroke="#c9c9cb" strokeWidth="1.200" />)}
  </>
);
const WeChat = () => (
  <>
    <defs><G id="wa" s={["#a6e26f", "#74c544"]} /><G id="wb" s={["#ffffff", "#e4e4e6"]} /></defs>
    <path d="M-38 10L-40 25-22 18z" fill="#79c848" /><ellipse cx="-15" cy="-10" rx="38" ry="32.500" fill="url(#wa)" /><circle cx="-28" cy="-21" r="5" fill="#2c6b25" /><circle cx="-3" cy="-21" r="5" fill="#2c6b25" />
    <path d="M26 36L41 42 39 28z" fill="#e6e6e8" /><ellipse cx="20" cy="13.500" rx="31.500" ry="27" fill="url(#wb)" /><circle cx="9.500" cy="5" r="4.200" fill="#7d7d7d" /><circle cx="30.500" cy="5" r="4.200" fill="#7d7d7d" />
  </>
);
const Swoosh = () => (
  <path d="M-32 26C-32 19-10 4 10 1 24-1 34 4 32 10 29 17 14 8 5-2-4-13-9-28-6-34-3-38 1-35 0-26-2-8-18 26-26 29-30 30-32 29-32 26z" fill="none" stroke="#fff" strokeWidth="3.600" />
);
const Acrobat = () => (
  <>
    <defs><G id="ac" x2={1} s={["#3c1d15", "#250303"]} /></defs>
    <rect x="-54" y="-56" width="108" height="106" fill="#e5472b" /><rect x="-49" y="-51" width="99" height="96" fill="url(#ac)" /><Swoosh />
  </>
);
const AcrobatDmg = () => (
  <>
    <circle cx="-3" cy="-40" r="17" fill="#e9e9ea" /><rect x="-49" y="-45" width="99" height="96" fill="#e5472b" /><rect x="-45" y="-41" width="90" height="87" fill="url(#ac)" />
    <circle cy="3" r="33" fill="none" stroke="#4e2430" strokeWidth="2" opacity=".7" /><g transform="translate(0 5) scale(.92)"><Swoosh /></g>
  </>
);
const FinderWindow = () => (
  <>
    <rect x="-55" y="-45" width="110" height="89" fill="#fdfdfd" /><rect x="-55" y="-45" width="110" height="6" fill="#e8e8e8" /><rect x="-55" y="-39" width="14" height="83" fill="#eeeeef" />
    <path d="M-52-43h6" stroke="#e66" strokeWidth="2" strokeDasharray="1.500 1" /><path d="M-48-35V40" stroke="#b9b9b9" strokeWidth="6" strokeDasharray="1.500 2.200" />
    {Array.from({ length: 19 }, (_, i) => { const r = Math.floor(i / 7), c = i % 7; return <g key={i}><rect x={-37 + c * 12.2} y={-36 + r * 12.500} width="7.500" height="5.500" rx="1" fill={r === 1 && c === 6 ? "#f0dada" : "#74c1ec"} /><path d={`M${-37 + c * 12.2} ${-28.500 + r * 12.500}h7.500`} stroke="#999" /></g>; })}
    <g transform="translate(34 34.500) scale(.375)"><FinderFace /></g>
  </>
);
const Trash = () => (
  <>
    <defs><G id="ta" x2={1} y2={0} s={["#b9babd", "#dcdddf", "#cbccce", "#e2e2e4", "#aeafb2"]} /></defs>
    <path d="M-41-44H42L31 44Q28 52 0 52T-29 44z" fill="url(#ta)" opacity=".95" /><ellipse cy="-44" rx="42" ry="8" fill="#8e8f92" />
    <path d="M-38-44L-26-50-15-55-8-47 2-53 9-55 14-48 26-50 36-42 22-33 8-36-6-32-22-34z" fill="#e4e4e4" /><path d="M-22-46l10-5 6 9-9 4zM12-48l10 5-4 8-10-3z" fill="#5b5f66" /><path d="M-14-42l10-5 6 5-10 4z" fill="#46b5a9" /><path d="M6-40l8-8 4 6z" fill="#d8683c" />
    <path d="M-41-44Q0-26 42-44" fill="none" stroke="#f4f4f5" strokeWidth="2.500" /><path d="M-14-30Q6-20 20-32M-30 0Q0 20 24-10M-24 30Q0 36 20 22" fill="none" stroke="#fff" strokeOpacity=".4" strokeWidth="3" />
  </>
);
const DOCK = [[FinderFace, "#111"], [Mail], [Calendar], [Photos], [Messages], [Pages], [Numbers], [Keynote], [ITunes, 1], [Xcode, 1], [SysPref], [AppStore], [Slack], [Globe], [Terminal, 1], [ChromeIcon, 1], [RIcon], [OneDrive], [Sublime, 1], [Notes], [WeChat], [Acrobat, 1]];
const DockItem = ({ art: Art, w, dot }) => (
  <Slot $w={w}>
    <DockSvg width={w} height="128" viewBox={`${-w / 2} -66 ${w} 128`}><Art /></DockSvg>
    {dot ? <RunDot $c={dot === 1 ? "#5b3a10" : dot} /> : null}
  </Slot>
);
const MenuArrow = () => <I w={10} h={8} vb="0 0 10 8"><path d="M0 0h10L5 8z" fill="#000" /></I>;

export default function App() {
  return (
    <Desktop>
      <GlobalStyle />
      <MenuBar>
        <MenuGroup>
          <MenuItem $w={69}><I w={31} h={44} vb="0 0 31 44"><g transform="translate(0 4)"><FaApple size={31} color="#171717" /></g></I></MenuItem>
          {MENUS.slice(0, -1).map(([t, x, bold, ls], i) => (
            <MenuItem key={t} $bold={bold} $ls={ls} $w={MENUS[i + 1][1] - x}>{t}</MenuItem>
          ))}
        </MenuGroup>
        <MenuGroup>
          <MenuItem $w={45}><I><path d="M1 2h30v15q0 7-15 14Q1 24 1 17z" stroke="#3f3628" strokeWidth="2.600" /><path d="M22 8.500H12q-2 0-2 2v2q0 2 2 2h8q2 0 2 2v2q0 2-2 2H9" stroke="#3f3628" strokeWidth="3.400" /></I></MenuItem>
          <MenuItem $w={63}><I w={42} vb="0 0 42 32"><path d="M17 9.500L11 6 3.500 15.500 11 24 29.500 6 38 15.500 29.500 24 24 20" stroke="#0a0a0a" strokeWidth="6" strokeLinejoin="round" /></I></MenuItem>
          <MenuItem $w={49}><I w={24} vb="4 0 24 32"><path d="M7 9l17 14-8.500 8V1L24 9 7 23" stroke="#3f3628" strokeWidth="2" /></I></MenuItem>
          <MenuItem $w={66}><I w={40} vb="0 0 40 32"><path d="M1 10q19-17 38 0M7 16.500q13-12 26 0M13 23q7-6 14 0" stroke="#3f3628" strokeWidth="2.800" /><circle cx="20" cy="27.500" r="3" fill="#3f3628" /></I></MenuItem>
          <MenuItem $w={62}><I w={36} vb="0 0 36 32"><path d="M9 21H1V3h34v18h-8" stroke="#3f3628" strokeWidth="2.200" /><path d="M18 16l11 13H7z" fill="#3f3628" /></I></MenuItem>
          <MenuItem $w={70} $size={24} $ls={-1}>100%</MenuItem>
          <MenuItem $w={76}><I w={46} vb="0 0 46 32"><rect x="1.200" y="5" width="38" height="22" rx="4" stroke="#3f3628" strokeWidth="2.200" /><rect x="4.500" y="8" width="31.500" height="16" rx="1" fill="#3f3628" /><path d="M42 12.500q4 3.500 0 7z" fill="#3f3628" stroke="#3f3628" /><path d="M22 2L13 17.500h7L17.500 31 28 14h-7.500L25 2z" fill="#3f3628" stroke="#f3eadb" strokeWidth="2" /></I></MenuItem>
          <MenuItem $w={72}><I w={31} h={20} vb="0 0 31 20"><path d="M0 0h31v20H0z" fill="#efe9e0" stroke="#9b8d80" /><path d="M0 0h6.500v20H0zM24.500 0H31v20h-6.500z" fill="#c4270e" /><path d="M15.500 3l1.500 3 2-1v4l3-1-1 3-4 3h-1v3h-1v-3h-1l-4-3-1-3 3 1V5l2 1z" fill="#d2301a" /></I></MenuItem>
          <MenuItem $w={208}>Tue 5:37 PM</MenuItem>
          <MenuItem $w={64}><I><circle cx="11" cy="12" r="9" stroke="#222" strokeWidth="2.400" /><path d="M17.500 19L27 30" stroke="#222" strokeWidth="3.200" /></I></MenuItem>
          <MenuItem $w={56}><I><defs><radialGradient id="siri" cx=".45" cy=".7"><stop stopColor="#bff" /><stop offset=".3" stopColor="#6fa8f0" /><stop offset=".6" stopColor="#4a2f98" /><stop offset="1" stopColor="#130c3c" /></radialGradient></defs><circle cx="16" cy="16" r="15.500" fill="url(#siri)" stroke="#111" /><path d="M3 20Q14 12 29 18 18 28 3 20z" fill="#e48fe0" opacity=".5" /></I></MenuItem>
          <MenuItem $w={36}><I w={36} vb="0 0 36 32"><path d="M0 8h4M0 16h4M0 24h4M8 8h28M8 16h22M8 24h28" stroke="#171717" strokeWidth="3.600" /></I></MenuItem>
        </MenuGroup>
      </MenuBar>

      <BackWindow $x={0} $w={3360} $dim><GreyDot /><GreyDot /></BackWindow>
      <BackWindow $x={62} $w={1325}>
        <GreyDot /><GreyDot /><GreyDot />
        <BackTitle $x={339}><I w={30} h={46} vb="0 0 30 46"><path d="M0 12q0-2 2-2h8l3 3h15q2 0 2 2v20H0z" fill="#9dd0ea" /><path d="M6 17h18v10H6z" fill="none" stroke="#6fb2d8" strokeWidth="2" /></I><span>Desktop — -bash — 91×63</span></BackTitle>
      </BackWindow>
      <BackWindow $x={1408} $w={1960}>
        <GreyDot $edited /><GreyDot /><GreyDot />
        <BackTitle $x={664}><I w={26} h={46} vb="0 0 26 46"><path d="M1 25L13 13l12 12M5 23v12h16V23" fill="none" stroke="#c3b5a4" strokeWidth="3" /></I><span>govi — ssh ◂ sh startV.sh — 145×63</span></BackTitle>
      </BackWindow>

      <Browser>
        <TabStrip>
          <Lights><Light $c="#ee6a5f" $b="#d8574c" /><Light $c="#f6be50" $b="#dca43a" /><Light $c="#62c655" $b="#4fae42" /></Lights>
          {TABS.map(([t, Icon, ls], i) => (
            <TabBox key={i} $z={i === 9 ? 30 : 15 - i}>
              <TabShape width="296" height="57" viewBox="0 0 296 57"><path d="M0 56.500L24 3Q25.500.5 28 .5H268Q270.500.5 272 3L296 57H0" fill={i === 9 ? "#f2f2f2" : "#cfcfcf"} /><path d="M0 56.500L24 3Q25.500.5 28 .5H268Q270.500.5 272 3L296 57" fill="none" stroke="#8f8f8f" strokeWidth="1.200" /></TabShape>
              <TabIcon><Icon /></TabIcon>
              <TabTitle $ls={ls}>{t}</TabTitle>
              <XIcon />
            </TabBox>
          ))}
          <NewTab width="66" height="32" viewBox="0 0 66 32"><path d="M3 1H50q3 0 4 3l10 24q1 3-2 3H16q-3 0-4-3L1 4Q0 1 3 1z" fill="#d0d0d0" stroke="#9c9c9c" strokeWidth="1.400" /></NewTab>
          <Profile><I w={24} h={24} vb="0 0 24 24"><path d="M9 2Q2 5 2 12t5 9M15 22q7-3 7-10t-5-9" stroke="#c5573f" strokeWidth="2.600" fill="none" /><path d="M2 22.500h8v-7zM22 1.500h-8v7z" fill="#c5573f" /><path d="M12 6v7M12 15.500v3" stroke="#c5573f" strokeWidth="2.600" /></I><span>Johnson</span></Profile>
        </TabStrip>
        <NavRow>
          <NavSlot><I><path d="M29 16H5M16 4L4 16l12 12" stroke="#5c5c5c" strokeWidth="2.600" /></I></NavSlot>
          <NavSlot><I><path d="M3 16h24M16 4l12 12-12 12" stroke="#d2d2d2" strokeWidth="2.600" /></I></NavSlot>
          <NavSlot><I><path d="M27 19.500A11.500 11.500 0 1 1 25 8.500" stroke="#5c5c5c" strokeWidth="2.800" /><path d="M29.500 2.500V13H19z" fill="#5c5c5c" /></I></NavSlot>
          <NavSlot><I><path d="M4 17L16 4.500 28 17h-4v11H8V17z" stroke="#5c5c5c" strokeWidth="2.600" /></I></NavSlot>
          <UrlBox>
            <I w={28} h={28} vb="0 0 28 28"><circle cx="14" cy="14" r="12.500" stroke="#5c5c5c" strokeWidth="2.200" /><path d="M14 12v9M14 7v3" stroke="#5c5c5c" strokeWidth="2.400" /></I>
            <UrlText><b>localhost</b>:3000/orders/1</UrlText>
            <I><path d="M16 2.500l3.700 9.200 9.800.7-7.600 6.300 2.400 9.600L16 23l-8.300 5.300 2.400-9.600-7.600-6.300 9.800-.7z" stroke="#5c5c5c" strokeWidth="2.400" /></I>
          </UrlBox>
          <NavSlot><I><path d="M9.500 0h13L32 9.500v13L22.500 32h-13L0 22.500v-13z" fill="#c7341c" /><text x="16" y="21.500" textAnchor="middle" fontSize="15.500" fontWeight="800" fill="#fff" fontFamily="Open Sans" letterSpacing="-.700">ABP</text></I></NavSlot>
          <NavSlot><I><rect width="32" height="32" fill="#fff" /><g fontFamily="Liberation Serif" fontSize="18" fill="#999"><text x="1" y="20">T</text><text x="10" y="25">E</text><text x="18.500" y="20">X</text></g></I></NavSlot>
          <NavSlot><I><path d="M3 4h20q3 0 3 3v15q0 2-3 2h-5v5l-6-5H3q-3 0-3-3V7q0-3 3-3z" fill="#d9d9d9" /><path d="M28 7l4-3v16l-4-2z" fill="#d9d9d9" /><text x="12" y="20" textAnchor="middle" fontSize="16" fontWeight="700" fill="#fff" fontFamily="Inter">a</text></I></NavSlot>
          <NavSlot><I><circle cx="16" cy="6" r="3" fill="#5c5c5c" /><circle cx="16" cy="16" r="3" fill="#5c5c5c" /><circle cx="16" cy="26" r="3" fill="#5c5c5c" /></I></NavSlot>
        </NavRow>
        <Bookmarks>
          {BOOKMARKS.slice(0, -1).map(([x, Icon, t, ls], i) => (
            <Bookmark key={x} $w={BOOKMARKS[i + 1][0] - x} $ls={ls}><Icon />{t && <span>{t}</span>}</Bookmark>
          ))}
        </Bookmarks>

        <Page>
          <Navbar>
            <Container>
              <NavLine>
                <Brand>Jungle</Brand>
                <NavLink>Home</NavLink>
                <NavLink $ls={-0.15}>Your Reviews</NavLink>
                <NavLink $ls={0.15}>Categories<Caret /></NavLink>
                <Spacer />
                <NavLink $c="#a94442"><FaLock size={19} />&nbsp;Admin<Caret /></NavLink>
                <NavLink $ls={-0.15}><FaShoppingCart size={26} />&nbsp;My Cart (0)</NavLink>
              </NavLine>
              <UserLine>liujohnson118@yahoo.com | <a>Logout</a></UserLine>
            </Container>
          </Navbar>
          <Container>
            <PageHeader>
              <H1 $ls={-0.4}>Order #1</H1>
              <H1 $ls={0.95}>Order email liujohnson118@yahoo.com</H1>
              <H1 $ls={1}>Order amount 5183</H1>
            </PageHeader>
            <H2>Order details</H2>
            <Table>
              <Row $head><Cell>Item</Cell><Cell>Quantity</Cell></Row>
              {ITEMS.map(([name, qty]) => <Row key={name}><Cell>{name}</Cell><Cell>{qty}</Cell></Row>)}
            </Table>
            <Jumbotron>Thank you for your order!</Jumbotron>
            <Button>Continue Shopping</Button>
          </Container>
        </Page>

        <Shelf>
          <Download><I w={26} h={34} vb="0 0 26 34"><path d="M1 1h15l9 9v23H1zM16 1v9h9" fill="#fff" stroke="#c4c4c4" /></I><FileName>ios_development.cer</FileName><DownMenu><MenuArrow /></DownMenu></Download>
          <Download><I w={26} h={34} vb="0 0 26 34"><path d="M1 1h15l9 9v23H1zM16 1v9h9" fill="#fff" stroke="#c4c4c4" /><path d="M12 1v18" stroke="#555" strokeWidth="4" strokeDasharray="3 1.500" /></I><FileName>CameraExample.zip</FileName><DownMenu><MenuArrow /></DownMenu></Download>
          <Spacer />
          <ShowAll><I w={28} h={28} vb="0 0 28 28"><path d="M14 1v12M1 25.500h27" stroke="#555" strokeWidth="3.200" /><path d="M5 10h18l-9 9z" fill="#555" /></I><span>Show All</span></ShowAll>
          <ShelfClose><XIcon c="#111" s={15} /></ShelfClose>
        </Shelf>
      </Browser>

      <Dock>
        {DOCK.map(([art, dot], i) => <DockItem key={i} art={art} dot={dot} w={123.24} />)}
        <Divider />
        <DockItem art={AcrobatDmg} w={124.4} />
        <DockItem art={FinderWindow} w={124.4} />
        <DockItem art={Trash} w={124.4} />
      </Dock>
    </Desktop>
  );
}
